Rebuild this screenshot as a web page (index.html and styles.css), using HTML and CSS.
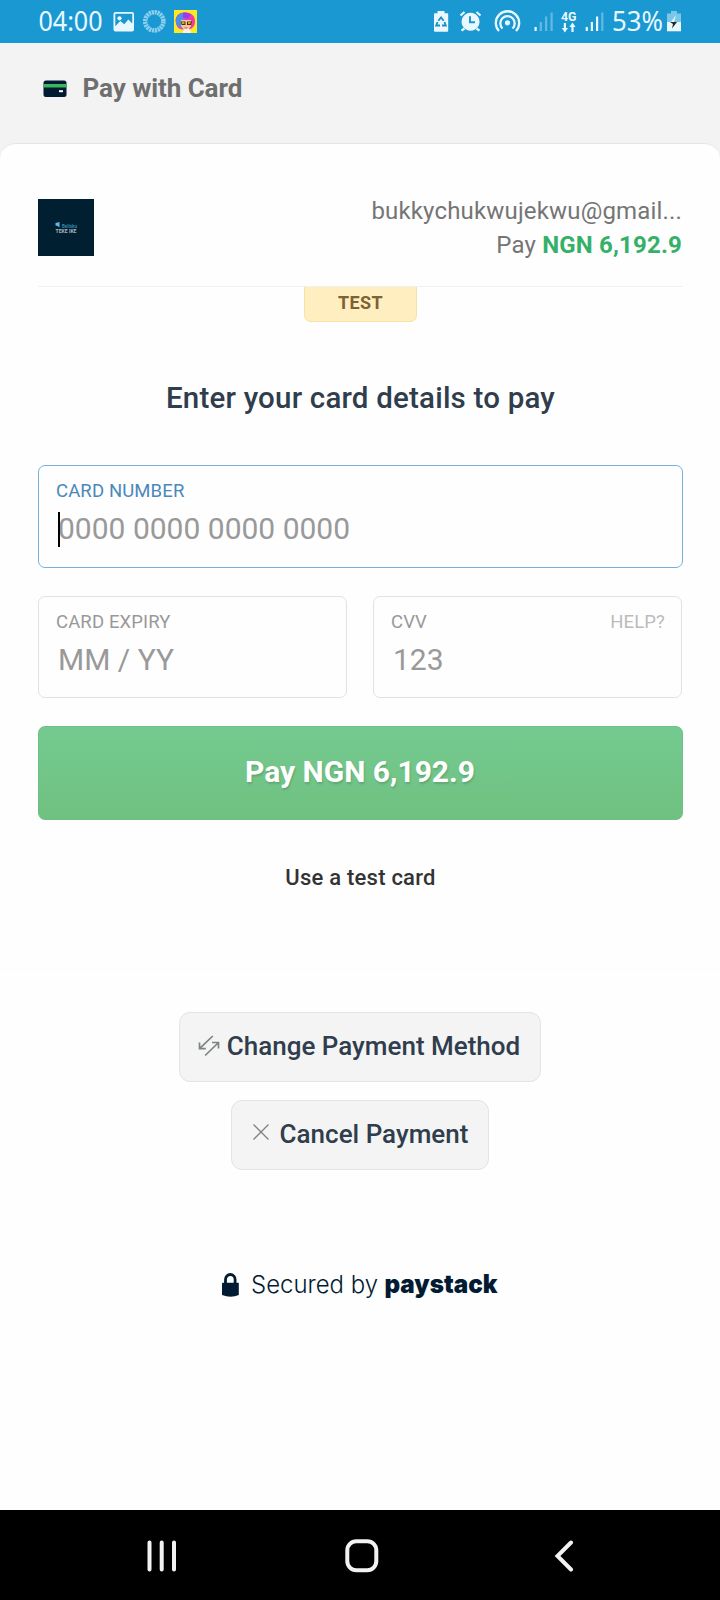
FILE: index.html
```html
<!DOCTYPE html>
<html lang="en">
<head>
<meta charset="utf-8">
<title>Pay with Card</title>
<link rel="stylesheet" href="styles.css">
</head>
<body>
<div class="screen">
  <div class="status">
    <svg class="status-art" width="720" height="43" viewBox="0 0 720 43" fill="#e9f8ff">
      <text x="38.5" y="31.3" class="status-text" textLength="64" lengthAdjust="spacingAndGlyphs">04:00</text>
      <path fill-rule="evenodd" d="M115.500 12h16.500q2 0 2 2v15.500q0 2-2 2h-16.500q-2 0-2-2v-15.500q0-2 2-2zM115.300 13.800v12.500l5-5.300 4 3.300 4-4.800 4 4v-9.700z"/>
      <circle cx="119.500" cy="18.300" r="2.100"/>
      <circle cx="154.300" cy="21.300" r="9.100" fill="none" stroke="#8dcfee" stroke-width="4.600" stroke-dasharray="2.180 .680"/>
      <rect x="174" y="10" width="23" height="23" fill="#ffea22"/>
      <path d="M176 23c-2-6 3-11 9-10.500 7-.5 11.500 5 9.500 11-1 4-4 5.500-6 6h-6c-4-.5-6-3-6.500-6.500z" fill="#e33fc4"/>
      <path d="M176 22c-1-5 3-9 7-9.300l2 5-4 4v6c-3-1-5-3-5-5.700z" fill="#4d8fe8"/>
      <path d="M183 12.700c3-.8 6 .2 8 2l-3 4-5-1z" fill="#9a3bea"/>
      <path d="M191 15c4 3 4.500 7 3 11l-3 3-2-9z" fill="#f23aa0"/>
      <path d="M181 20h10v6l-3 4h-4l-3-4z" fill="#f6c6a0"/>
      <path d="M183 31l2-3h3l3 3v2h-8z" fill="#fff0df"/>
      <path d="M181 21.500h4.500v3.500h-4zM187 21.500h5l-1 3.500h-4z" fill="#493000"/>
      <path d="M182 22.300h2.500v1.500h-2.500zM188 22.300h2.500v1.500h-2.500z" fill="#ffcf22"/>
      <path d="M184.500 28h3" stroke="#d14242"/>

      <path d="M437.500 11h7v2.300h3q.7 0 .7.800V30.800q0 1-1 1h-12.200q-1 0-1-1V14.100q0-.8.800-.8h2.700z"/>
      <path d="M438.300 20.800l2.700-3.300 2.700 3.300M444.500 22l1.300 3.500h-3.800M440 25.500h-3.800l1.300-3.500" fill="none" stroke="#1a8fc4" stroke-width="1.800"/>
      <path fill-rule="evenodd" d="M470.500 12.700a9 9 0 1 0 .1 0zM469 16.300h2v5h4v2h-6z"/>
      <path d="M460.500 15.500l4-3.500M480.500 15.500l-4-3.500M464.500 28.500l-3 2.200M476.500 28.500l3 2.200" stroke="#e9f8ff" stroke-width="2.200"/>
      <circle cx="507.500" cy="22.800" r="2.600"/>
      <path d="M499 31a11.700 11.700 0 1 1 17 0M502.500 28.500a7.200 7.200 0 1 1 10 0" fill="none" stroke="#e9f8ff" stroke-width="2.300"/>
      <path d="M534.500 27h2.200v4h-2.200z"/>
      <path d="M539.700 22h2.200v9h-2.200zM545 16.500h2.200V31H545zM550.500 12.500h2.200V31h-2.200z" fill="#65b9e1"/>
      <text x="561" y="20.800" class="net-text" textLength="15.500" lengthAdjust="spacingAndGlyphs">4G</text>
      <path d="M563.800 23h2.200v5h2l-3.100 4.500-3.100-4.500h2zM571.400 32v-5h-2l3.100-4.500 3.100 4.500h-2v5z"/>
      <path d="M585.700 27h2.200v4h-2.200zM590.800 22h2.200v9h-2.200zM596 16.500h2.200V31H596z"/>
      <path d="M601.200 12.500h2.200V31h-2.200z" fill="#65b9e1"/>
      <text x="612" y="31.300" class="status-text" textLength="51" lengthAdjust="spacingAndGlyphs">53%</text>
      <path d="M671 11h6v2.500h4V22h-14v-8.500h4z" fill="#7cc6e8"/>
      <path d="M667 22h14v9.300h-14z"/>
      <path d="M676 15l-5 7h3z"/>
      <path d="M670 22h7l-5 6.500 1-4.500z" fill="#172936"/>
    </svg>
  </div>

  <header class="topbar">
    <svg width="24" height="18" viewBox="0 0 24 18"><rect x=".5" y=".5" width="23" height="16.500" rx="2.500" fill="#011b33"/><path d="M.5 4h23v3.500H.5z" fill="#3bb75e"/><path d="M16 10.200h4v2h-4z" fill="#fff"/></svg>
    <span class="topbar-title">Pay with Card</span>
  </header>

  <main class="card">
    <div class="merchant">
      <svg class="logo" width="56" height="57" viewBox="0 0 56 57">
        <rect width="56" height="57" fill="#002031"/>
        <path d="M17.500 24l4-1v5.500l-2-1.500-2-.5z" fill="#5db9e6"/>
        <text x="24" y="28.500" class="logo-a" textLength="15" lengthAdjust="spacingAndGlyphs">Belloku</text>
        <text x="17.500" y="34.300" class="logo-b" textLength="21" lengthAdjust="spacingAndGlyphs">TEKE IKE</text>
      </svg>
      <div class="payer">
        <div class="email">bukkychukwujekwu@gmail...</div>
        <div class="amount">Pay <b>NGN 6,192.9</b></div>
      </div>
    </div>
    <div class="test-tag">TEST</div>
    <h1 class="title">Enter your card details to pay</h1>
    <div class="field field-active">
      <div class="label">CARD NUMBER</div>
      <div class="value"><i class="caret"></i>0000 0000 0000 0000</div>
    </div>
    <div class="pair">
      <div class="field">
        <div class="label">CARD EXPIRY</div>
        <div class="value">MM / YY</div>
      </div>
      <div class="field">
        <div class="label">CVV<span class="help">HELP?</span></div>
        <div class="value">123</div>
      </div>
    </div>
    <div class="pay">Pay NGN 6,192.9</div>
    <div class="test-card">Use a test card</div>
  </main>

  <div class="actions">
    <div class="action action-change">
      <svg width="22" height="22" viewBox="0 0 22 22" fill="none" stroke="#7d8285" stroke-width="1.700"><path d="M14.800 1L2 13.200M1.500 7.500v6.200h6.300M7.200 20.500L20 8M14 7.500h6.500v6"/></svg>
      <span>Change Payment Method</span>
    </div>
    <div class="action action-cancel">
      <svg width="16" height="16" viewBox="0 0 16 16" fill="none" stroke="#7d8285" stroke-width="1.300"><path d="M.5.500l15 15M15.500.500l-15 15"/></svg>
      <span>Cancel Payment</span>
    </div>
  </div>

  <footer class="secured">
    <svg width="320" height="40" viewBox="200 1265 320 40" fill="#011b33">
      <path d="M222 1283.500q0-.8.800-.8H238q.8 0 .8.800V1295q-8 3.500-16.800 0z"/>
      <path d="M225.500 1283v-3.500a4.800 5 0 0 1 9.600 0v3.500" fill="none" stroke="#011b33" stroke-width="2.800"/>
      <text x="251" y="1293" class="secured-text" textLength="127" lengthAdjust="spacingAndGlyphs">Secured by</text>
      <text x="384.500" y="1293" class="brand" textLength="113" lengthAdjust="spacingAndGlyphs">paystack</text>
    </svg>
  </footer>

  <nav class="navbar">
    <svg width="30" height="32" viewBox="0 0 30 32" stroke="#f2f2f2" stroke-width="4" stroke-linecap="round"><path d="M2.500 2.500v27M14.700 2.500v27M27 2.500v27"/></svg>
    <svg class="home" width="34" height="34" viewBox="0 0 34 34"><rect x="2.300" y="2.300" width="29" height="29" rx="9" fill="none" stroke="#f2f2f2" stroke-width="4"/></svg>
    <svg width="20" height="32" viewBox="0 0 20 32" fill="none" stroke="#f2f2f2" stroke-width="4" stroke-linecap="round"><path d="M17 2.500L3.500 16 17 29.500"/></svg>
  </nav>
</div>
</body>
</html>
```
FILE: styles.css
```css
* { box-sizing: border-box; }
body { margin: 0; background: #fefefe; font-family: Roboto, "Liberation Sans", sans-serif; }
.screen { width: 720px; height: 1600px; display: flex; flex-direction: column; background: linear-gradient(#f3f3f3 162px, #fefefe 162px); overflow: hidden; }
.status { height: 43px; flex: none; background: #1998d2; }
.status-art { display: block; }
.status-text { font-family: "Noto Sans", sans-serif; font-size: 27px; font-weight: 400; }
.net-text { font-family: Roboto, sans-serif; font-size: 12.5px; font-weight: 700; }
.topbar { height: 100px; flex: none; display: flex; align-items: center; padding: 0 0 10px 42.500px; gap: 16px; }
.topbar svg { margin-top: 2px; }
.topbar-title { font-size: 26px; line-height: 30px; font-weight: 700; letter-spacing: -.06px; color: #6f6f6f; }
.card { height: 825px; flex: none; padding: 0 37px 0 38px; background: #fefefe; border-top: 1px solid #e6e6e6; border-radius: 16px 16px 0 0; display: flex; flex-direction: column; }
.merchant { height: 143px; flex: none; display: flex; justify-content: space-between; align-items: flex-start; padding-top: 55px; border-bottom: 1px solid #f0f0f0; }
.logo { flex: none; }
.logo-a { font-size: 5px; font-weight: 700; fill: #3287ab; }
.logo-b { font-size: 4.500px; font-weight: 700; fill: #a8b3ba; }
.payer { text-align: right; font-size: 24px; line-height: 34px; letter-spacing: .17px; color: #757575; margin: -5px 1px 0 0; }
.amount b { color: #35b069; }
.test-tag { width: 113px; height: 35px; flex: none; align-self: center; text-align: center; font-size: 18px; line-height: 32px; letter-spacing: .4px; font-weight: 700; color: #7b6334; background: #ffeec0; border: 1px solid #f7e2a5; border-top: 0; border-radius: 0 0 7px 7px; }
.title { margin: 56px 0 0; text-align: center; font-size: 29.5px; line-height: 40px; letter-spacing: .2px; font-weight: 500; color: #2f3d4d; }
.field { height: 102px; flex: 1; border: 1px solid #e2e2e2; border-radius: 7px; padding: 15px 16px 0 17px; }
.field-active { height: 103px; flex: none; margin-top: 47px; border-color: #77b0d8; }
.label { display: flex; justify-content: space-between; font-size: 18.5px; line-height: 20px; letter-spacing: .13px; color: #999; }
.field-active .label { color: #4a88ba; }
.help { color: #bbb; }
.value { position: relative; margin-top: 9px; padding-left: 2px; font-size: 30px; line-height: 38px; color: #999; }
.caret { position: absolute; left: 2px; top: 2px; width: 2px; height: 35px; background: #000; }
.pair { display: flex; gap: 26px; margin-top: 28px; padding-right: 1px; }
.pay { height: 94px; flex: none; margin-top: 28px; border-radius: 7px; background: linear-gradient(#74ca90, #70c180); border: 1px solid #6dc087; padding-right: 1px; text-align: center; font-size: 30px; line-height: 90px; font-weight: 700; color: #fff; text-shadow: 1px 2px 2px rgba(0,0,0,.14); }
.test-card { margin-top: 43px; text-align: center; font-size: 22px; line-height: 30px; letter-spacing: .23px; font-weight: 500; color: #333; }
.actions { display: flex; flex-direction: column; align-items: center; gap: 18px; padding-top: 43px; border-top: 1px solid #fcfcfc; }
.action { height: 70px; display: flex; align-items: center; justify-content: center; border: 1px solid #e3e3e3; border-radius: 11px; background: #f4f4f4; font-size: 26px; line-height: 30px; font-weight: 500; color: #2f3d4d; padding-bottom: 2px; }
.action-change { width: 362px; gap: 7px; padding-right: 2px; }
.action-cancel { width: 258px; gap: 11px; padding-left: 1px; }
.action-cancel svg { margin-top: -5px; }
.secured { display: flex; justify-content: center; margin-top: 95px; }
.secured-text { font-family: Inter, sans-serif; font-size: 24px; font-weight: 300; }
.brand { font-family: Inter, sans-serif; font-size: 25.5px; font-weight: 900; }
.navbar { height: 90px; flex: none; margin-top: auto; background: #000; display: flex; justify-content: space-between; align-items: center; padding: 2px 146px 0 147px; }
.home { margin-right: 7px; }
```
